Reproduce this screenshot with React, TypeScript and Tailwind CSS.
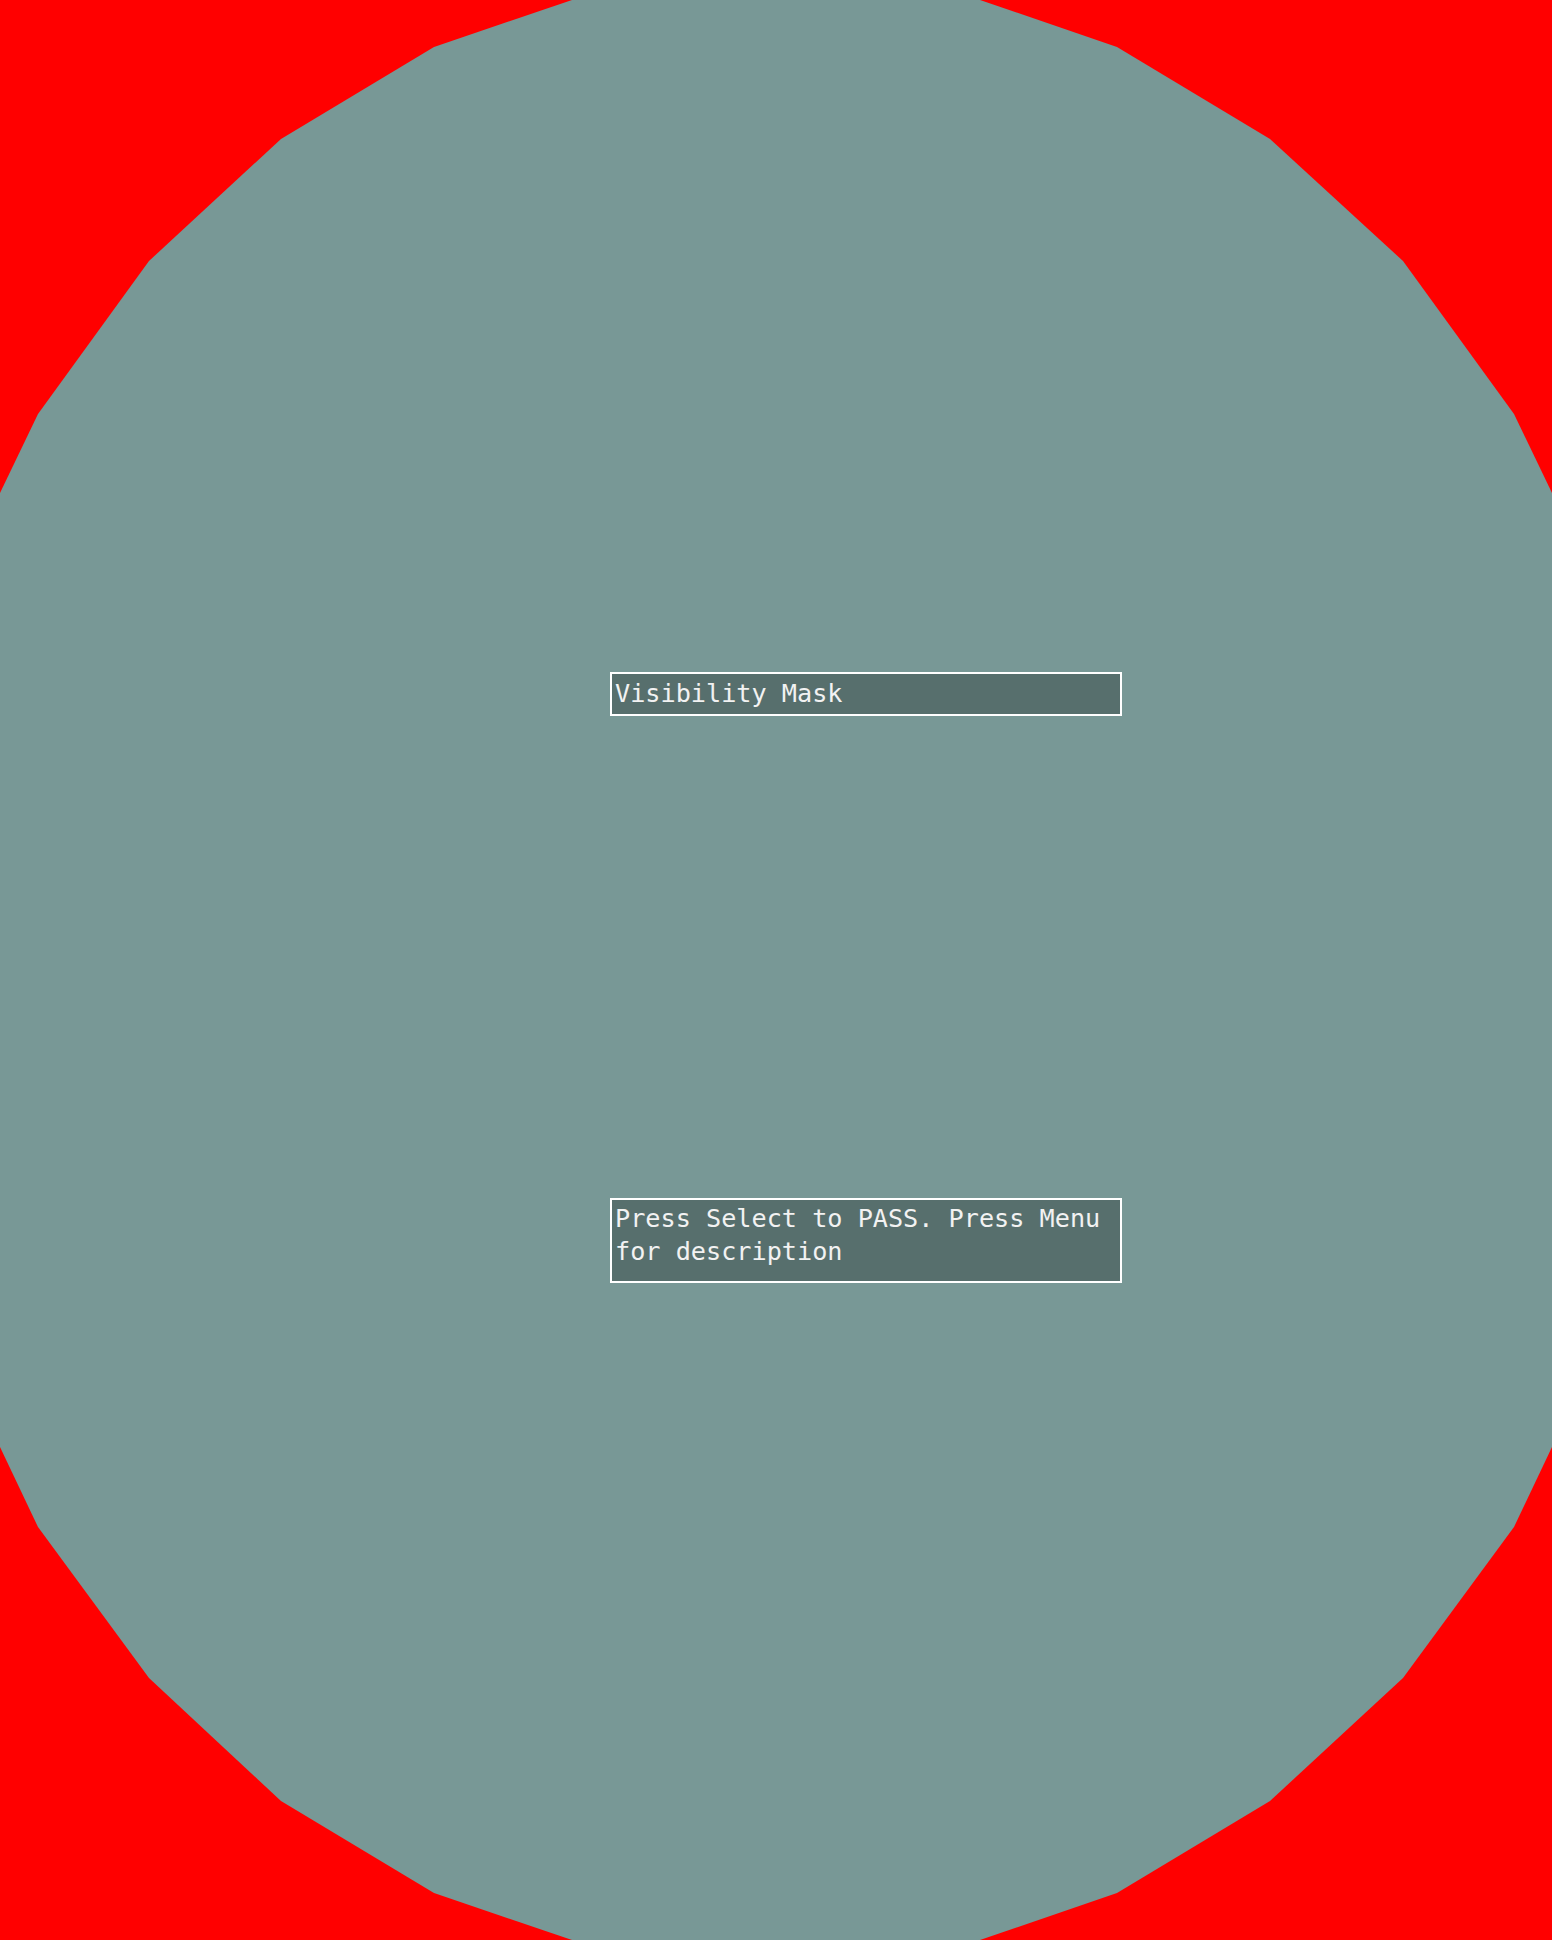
import React from "react";

// outline of the visible area, in page pixels
const maskPoints = [
  [572, 0], [980, 0], [1117, 47], [1270, 139], [1403, 261], [1514, 414], [1552, 493],
  [1552, 1447], [1514, 1527], [1403, 1678], [1270, 1801], [1117, 1893], [980, 1940],
  [572, 1940], [434, 1893], [281, 1801], [149, 1678], [38, 1527], [0, 1447],
  [0, 493], [38, 414], [149, 261], [281, 139], [434, 47],
]
  .map(([x, y]) => `${x},${y}`)
  .join(" ");

export default function App() {
  return (
    <div className="relative w-[1552px] h-[1940px] overflow-hidden bg-[#ff0000]">
      <svg
        className="absolute inset-0"
        width={1552}
        height={1940}
        viewBox="0 0 1552 1940"
      >
        <polygon points={maskPoints} fill="#789896" />
      </svg>

      <div
        className="relative flex flex-col pl-[610px] pt-[672px] text-[25.2px] text-[#f2f2f2]"
        style={{ fontFamily: '"DejaVu Sans Mono", "Liberation Mono", monospace' }}
      >
        {/* Title box */}
        <div className="w-[512px] h-[44px] border-2 border-white bg-[#576f6d] px-[3px] flex items-center leading-none">
          Visibility Mask
        </div>

        {/* Hint box */}
        <div className="mt-[482px] w-[512px] h-[85px] border-2 border-white bg-[#576f6d] px-[3px] pt-[2px] leading-[33px]">
          Press Select to PASS. Press Menu for description
        </div>
      </div>
    </div>
  );
}
